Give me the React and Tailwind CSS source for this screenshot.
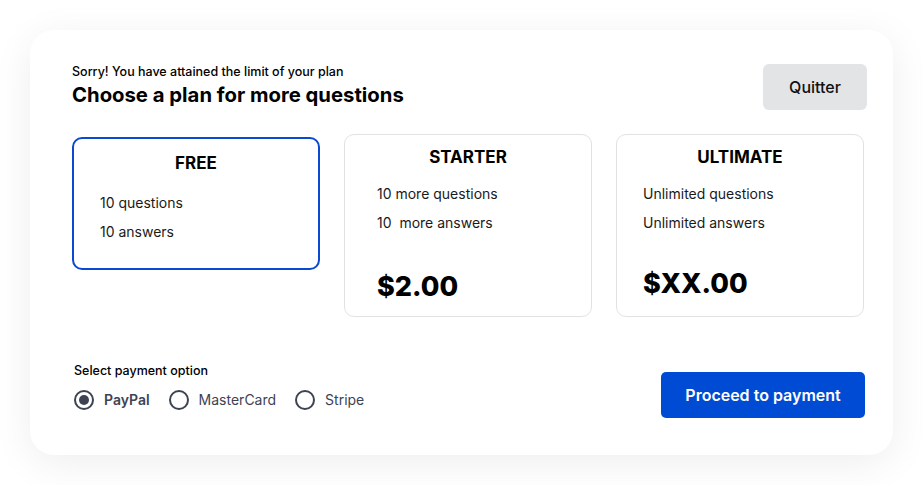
import { useState } from 'react';

const PLANS = [
  {
    name: 'FREE',
    lines: ['10 questions', '10 answers'],
  },
  {
    name: 'STARTER',
    lines: ['10 more questions', '10  more answers'],
    price: '$2.00',
  },
  {
    name: 'ULTIMATE',
    lines: ['Unlimited questions', 'Unlimited answers'],
    price: '$XX.00',
  },
];

const METHODS = ['PayPal', 'MasterCard', 'Stripe'];

function Radio({ label, checked, onClick }) {
  return (
    <button type="button" onClick={onClick} className="flex items-center gap-[10px]">
      <span className="flex h-5 w-5 items-center justify-center rounded-full border-2 border-[#3d4354]">
        {checked && <span className="h-[10px] w-[10px] rounded-full bg-[#3d4354]" />}
      </span>
      <span className={`text-[14px] leading-5 text-[#3d4354] ${checked ? 'font-semibold' : 'font-normal'}`}>
        {label}
      </span>
    </button>
  );
}

export default function App() {
  const [method, setMethod] = useState('PayPal');

  return (
    <div className="min-h-screen bg-white p-[30px] font-['Inter',sans-serif] text-black">
      <div className="w-[863px] rounded-[24px] bg-white pt-[34px] pb-[37px] pl-[42px] pr-[26px] shadow-[0_8px_40px_rgba(0,0,0,0.07)]">
        {/* Header */}
        <div className="flex items-start justify-between">
          <div>
            <p className="text-[12.5px] leading-4 font-medium">Sorry! You have attained the limit of your plan</p>
            <h1 className="mt-[2px] text-[20.3px] leading-[26px] font-bold">
              Choose a plan for more questions
            </h1>
          </div>
          <button className="h-[46px] w-[104px] rounded-[6px] bg-[#e3e4e6] text-[16px] font-medium text-[#111]">
            Quitter
          </button>
        </div>

        {/* Plans */}
        <div className="mt-[24px] flex items-start gap-[24px]">
          <div className="mt-[3px] w-[248px] rounded-[10px] border-2 border-[#0a49d0] pt-[12px] pb-[26px] pl-[26px]">
            <h2 className="pr-[26px] text-center text-[17px] leading-6 font-bold">{PLANS[0].name}</h2>
            <div className="mt-[18px] flex flex-col gap-[9px]">
              {PLANS[0].lines.map((l) => (
                <p key={l} className="text-[14px] leading-5 text-[#1a1a1a]">{l}</p>
              ))}
            </div>
          </div>

          <div className="h-[183px] w-[248px] rounded-[10px] border border-[#e2e2e2] pt-[10px] pl-[32px]">
            <h2 className="pr-[32px] text-center text-[17px] leading-6 font-bold">{PLANS[1].name}</h2>
            <div className="mt-[15px] flex flex-col gap-[9px]">
              {PLANS[1].lines.map((l) => (
                <p key={l} className="whitespace-pre text-[14px] leading-5 text-[#1a1a1a]">{l}</p>
              ))}
            </div>
            <p className="mt-[36px] text-[27px] leading-9 font-extrabold">{PLANS[1].price}</p>
          </div>

          <div className="h-[183px] w-[248px] rounded-[10px] border border-[#e2e2e2] pt-[10px] pl-[26px]">
            <h2 className="pr-[26px] text-center text-[17px] leading-6 font-bold">{PLANS[2].name}</h2>
            <div className="mt-[15px] flex flex-col gap-[9px]">
              {PLANS[2].lines.map((l) => (
                <p key={l} className="text-[14px] leading-5 text-[#1a1a1a]">{l}</p>
              ))}
            </div>
            <p className="mt-[33px] text-[27px] leading-9 font-extrabold">{PLANS[2].price}</p>
          </div>
        </div>

        {/* Payment */}
        <div className="mt-[46px] flex items-start justify-between">
          <div className="pl-[2px]">
            <p className="text-[12.5px] leading-4 font-medium">Select payment option</p>
            <div className="mt-[11px] flex items-center gap-[19px]">
              {METHODS.map((m) => (
                <Radio key={m} label={m} checked={method === m} onClick={() => setMethod(m)} />
              ))}
            </div>
          </div>
          <button className="mt-[9px] mr-[2px] h-[46px] w-[204px] rounded-[5px] bg-[#004bd3] text-[16px] font-semibold text-white">
            Proceed to payment
          </button>
        </div>
      </div>
    </div>
  );
}
